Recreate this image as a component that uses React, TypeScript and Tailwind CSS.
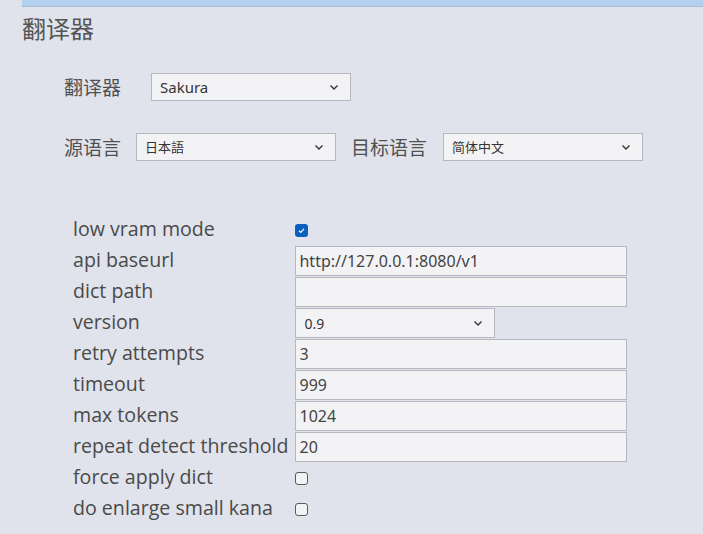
import React from 'react';

const ui = "font-['Segoe_UI','Open_Sans','Noto_Sans_CJK_SC',sans-serif]";

const Chevron = () => (
  <svg width="12" height="12" viewBox="0 0 12 12" className="text-[#333]" aria-hidden="true">
    <path d="M2.5 4.5 L6 8 L9.5 4.5" fill="none" stroke="currentColor" strokeWidth="1.4" />
  </svg>
);

const Select = ({ value, className = '' }: { value: string; className?: string }) => (
  <div
    className={`flex items-center justify-between h-[28px] pl-2 pr-[10px] bg-[#f3f3f5] border border-[#b5b8c0] text-[#333] ${className}`}
  >
    <span>{value}</span>
    <Chevron />
  </div>
);

const Input = ({ value = '' }: { value?: string }) => (
  <div className="flex items-center h-[30px] w-[332px] px-[3px] bg-[#f3f3f5] border border-[#b5b8c0] text-[16px] text-[#444] font-['Noto_Sans','Open_Sans',sans-serif]">
    {value}
  </div>
);

const Check = ({ checked }: { checked?: boolean }) =>
  checked ? (
    <div className="w-[13px] h-[13px] rounded-[3px] bg-[#0b5fbf] flex items-center justify-center">
      <svg width="9" height="9" viewBox="0 0 9 9" aria-hidden="true">
        <path d="M2 4.8 L3.8 6.4 L7 2.8" fill="none" stroke="white" strokeWidth="1.2" />
      </svg>
    </div>
  ) : (
    <div className="w-[13px] h-[13px] rounded-[3px] border border-[#5a5a5a] bg-[#f3f3f5]" />
  );

type Row = { label: string; kind: 'check' | 'input' | 'select'; value?: string; checked?: boolean };

const rows: Row[] = [
  { label: 'low vram mode', kind: 'check', checked: true },
  { label: 'api baseurl', kind: 'input', value: 'http://127.0.0.1:8080/v1' },
  { label: 'dict path', kind: 'input' },
  { label: 'version', kind: 'select', value: '0.9' },
  { label: 'retry attempts', kind: 'input', value: '3' },
  { label: 'timeout', kind: 'input', value: '999' },
  { label: 'max tokens', kind: 'input', value: '1024' },
  { label: 'repeat detect threshold', kind: 'input', value: '20' },
  { label: 'force apply dict', kind: 'check' },
  { label: 'do enlarge small kana', kind: 'check' },
];

export default function App() {
  return (
    <div className={`min-h-screen w-[703px] h-[534px] overflow-hidden bg-[#e0e3eb] text-[#505050] ${ui}`}>
      {/* top strip */}
      <div className="ml-[22px] h-[7px] bg-[#b3d1ef] border-b border-[#a9bfd8]" />

      <h1 className="ml-[22px] mt-[5px] text-[24px] leading-[32px] font-normal text-[#555] font-['Noto_Sans_CJK_SC',sans-serif]">
        翻译器
      </h1>

      {/* translator select */}
      <div className="flex items-center ml-[64px] mt-[29px] text-[19px] font-['Noto_Sans_CJK_SC',sans-serif]">
        <span>翻译器</span>
        <Select value="Sakura" className="w-[200px] ml-[30px] text-[15px] font-['Noto_Sans','Open_Sans',sans-serif]" />
      </div>

      {/* language row */}
      <div className="flex items-center ml-[64px] mt-[31px] text-[19px] font-['Noto_Sans_CJK_SC',sans-serif]">
        <span>源语言</span>
        <Select value="日本語" className="w-[200px] ml-[15px] text-[13px]" />
        <span className="ml-[15px]">目标语言</span>
        <Select value="简体中文" className="w-[200px] ml-[16px] text-[13px]" />
      </div>

      {/* options grid */}
      <div className="grid grid-cols-[auto_1fr] gap-x-[7px] gap-y-[1px] ml-[73px] mt-[54px] text-[19.6px] text-[#4a4a4a]">
        {rows.map((r) => (
          <React.Fragment key={r.label}>
            <div className="h-[30px] leading-[28px] whitespace-nowrap">{r.label}</div>
            <div className="h-[30px] flex items-center">
              {r.kind === 'check' && <Check checked={r.checked} />}
              {r.kind === 'input' && <Input value={r.value} />}
              {r.kind === 'select' && (
                <Select value={r.value ?? ''} className="w-[200px] h-[30px] text-[14px] font-['Noto_Sans','Open_Sans',sans-serif]" />
              )}
            </div>
          </React.Fragment>
        ))}
      </div>
    </div>
  );
}
